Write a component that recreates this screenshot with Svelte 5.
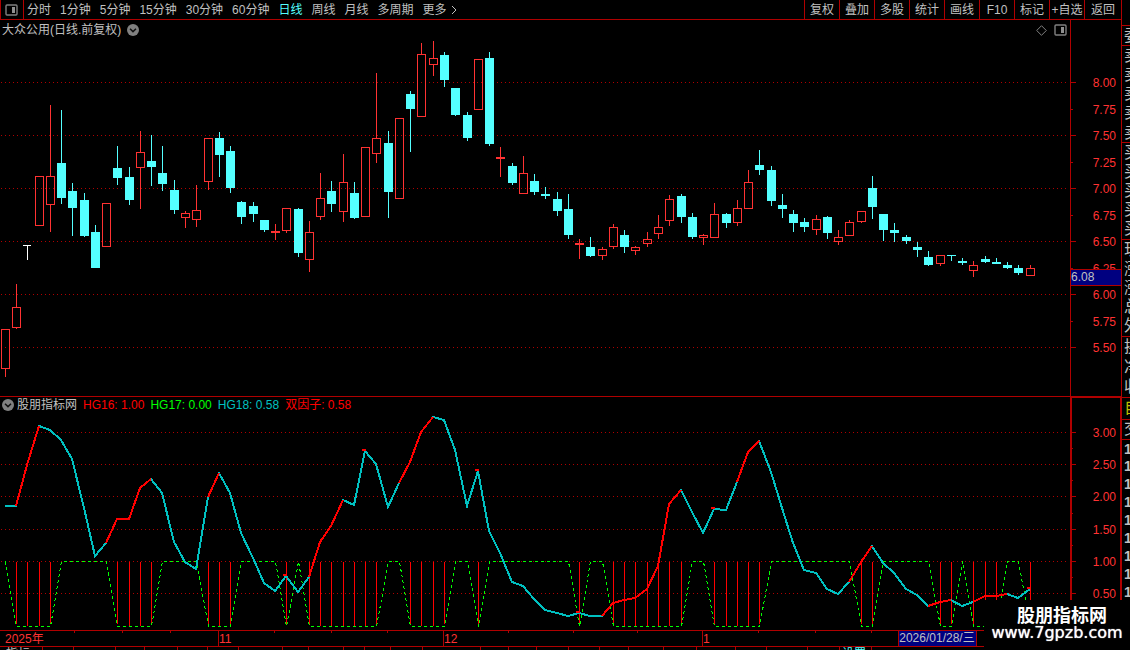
<script>
  const periods = ['分时', '1分钟', '5分钟', '15分钟', '30分钟', '60分钟', '日线', '周线', '月线', '多周期', '更多'];
  const tools = ['复权', '叠加', '多股', '统计', '画线', 'F10', '标记', '+自选', '返回'];
  let active = $state('日线');

  const xAt = (i) => Math.floor(5.3 + i * 11.262);
  const TOP = 20;
  const LOW_TOP = 397;
  const W = 1070;
  const H1 = 376;
  const H2 = 233;

  // kind (u = up, d = down, f = flat), high, body top, body bottom, low
  const candles = `u 329 329 369 377|u 284 307 328 329|f 245 245 246 260|u 176 176 226 226|u 105 176 205 232|d 110 163 198 204
d 183 191 208 236|d 193 200 236 237|d 225 232 268 268|u 203 203 247 247|d 146 168 178 185|d 167 177 200 205
u 131 152 168 209|d 135 161 167 186|d 146 173 184 191|d 180 190 210 214|u 211 213 218 228|u 185 210 220 227
u 138 138 182 190|d 132 138 155 177|d 146 151 188 193|d 201 202 217 224|d 202 206 214 222|d 220 220 230 232
u 224 231 233 240|u 208 208 231 233|d 208 209 253 257|u 221 232 260 272|u 173 198 217 220|d 181 191 204 212
u 154 182 212 222|d 182 193 218 219|u 147 147 217 217|u 73 138 154 163|d 131 143 192 218|u 118 118 199 199
d 91 94 109 152|u 43 54 117 117|u 41 58 65 76|d 52 55 80 87|d 88 88 115 116|d 112 115 138 141
u 59 59 110 110|d 52 58 144 146|u 147 157 159 177|d 163 166 183 185|u 156 173 194 194|d 174 181 192 195
d 187 194 196 199|d 192 199 211 216|d 194 209 235 239|u 239 243 245 259|d 237 247 256 257|u 247 249 256 260
u 224 227 247 249|d 230 235 247 253|u 246 247 251 255|u 232 239 244 247|u 215 227 234 239|u 195 199 221 226
d 194 196 217 223|d 213 217 237 239|u 234 235 238 245|u 203 214 238 238|d 213 214 223 228|u 200 208 223 226
u 170 182 209 209|d 150 165 170 175|d 166 170 201 206|d 194 205 209 218|d 210 214 223 232|d 218 222 227 232
u 215 219 230 235|d 216 217 233 239|u 230 237 242 245|u 220 222 236 236|u 211 211 222 223|d 176 188 207 219
d 214 214 230 241|d 223 230 233 242|d 235 237 241 244|d 242 247 250 257|d 251 257 265 266|u 255 255 264 266
d 255 255 256 261|d 258 261 263 265|u 261 265 271 277|d 256 259 262 263|d 258 262 264 264|d 262 265 268 269
d 265 268 273 275|u 265 268 276 276`
    .split(/[|\n]/)
    .map((row, i) => {
      const [kind, ...v] = row.trim().split(' ');
      const [high, top, bottom, low] = v.map((n) => +n - TOP);
      return { kind, high, top, bottom, low, x: xAt(i) };
    });

  const factor = [
    506, 506, 465, 426, 430, 440, 459, 508, 556, 543, 519, 519, 488, 479, 493, 542, 562, 569, 497, 473,
    493, 533, 558, 583, 591, 576, 592, 577, 542, 526, 500, 505, 451, 464, 507, 483, 462, 432, 417, 420,
    450, 506, 471, 531, 553, 582, 586, 599, 610, 613, 616, 613, 616, 616, 603, 600, 598, 589, 566, 504,
    490, 512, 533, 509, 510, 482, 452, 441, 472, 508, 543, 570, 573, 589, 594, 582, 562, 546, 563, 573,
    589, 595, 606, 602, 600, 606, 602, 596, 596, 594, 598, 589
  ].map((y, i) => ({ x: xAt(i), y: y - LOW_TOP }));

  const rising = [[1, 3], [9, 13], [18, 19], [27, 30], [35, 38], [53, 60], [65, 67], [75, 77], [82, 84], [86, 89]];
  const single = [25, 32, 42, 51, 63, 91];
  const signalRuns = [[1, 4], [10, 13], [18, 20], [25, 25], [27, 33], [36, 39], [42, 42], [51, 51], [54, 60], [63, 67], [76, 77], [83, 84], [86, 88], [91, 91]];
  const inRun = (i) => signalRuns.some(([a, b]) => i >= a && i <= b);
  const edge = (i) => signalRuns.some(([a, b]) => i === a || i === b);
  const pts = (list) => list.map((p) => `${p.x},${p.y}`).join(' ');
  const signals = factor.map((p, i) => ({ x: p.x, on: inRun(i), edge: edge(i) }));
  const stateLine = signals.map((s) => `${s.x + 0.5},${s.on ? 229.5 : 164.5}`).join(' ');

  const priceGrid = [82, 135, 188, 241, 294, 347].map((y) => y - TOP);
  const priceTicks = ['8.00', '7.75', '7.50', '7.25', '7.00', '6.75', '6.50', '6.25', '6.00', '5.75', '5.50'].map((t, i) => ({
    t, major: i % 2 === 0, y: 62 + Math.floor(i * 26.5 + 0.5)
  }));
  const factorGrid = [432, 464, 496, 529, 561, 593].map((y) => y - LOW_TOP);
  const factorLabels = ['3.00', '2.50', '2.00', '1.50', '1.00', '0.50'];
  const factorMinor = [448, 480, 513, 545, 577].map((y) => y - LOW_TOP);

  const dayTicks = [74, 122, 170, 274, 331, 387, 508, 573, 637, 758, 815, 871];
  const months = [{ x: 218, t: '11' }, { x: 443, t: '12' }, { x: 702, t: '1' }];
  const tabTicks = [42, 73, 115, 144, 177, 207, 238, 282, 308, 343, 364, 390, 422, 480, 508, 536, 568, 599, 628, 663, 696, 735, 766, 807, 839, 871];

  const quote = [
    { h: 25, rows: [] },
    { h: 20, rows: ['委'] },
    { h: 97, rows: ['卖', '卖', '卖', '卖', '卖'] },
    { h: 97, rows: ['买', '买', '买', '买', '买'] },
    { h: 97, rows: ['现', '涨', '涨', '总', '外'] },
    { h: 61, rows: ['换', '净', '收'] },
    { h: 21, rows: ['自'], tone: 'own' },
    { h: 19, rows: ['交'] },
    { h: 163, rows: ['1', '1', '1', '1', '1', '1', '1', '1', '1'], tone: 'deals' },
    { h: 50, rows: [], tone: 'rest' }
  ];
  const px = (n) => `${(n / W) * 100}%`;
  const py = (n, h) => `${(n / h) * 100}%`;
</script>

{#snippet panelIcon()}
  <svg class="icon" width="13" height="12" viewBox="0 0 13 12" aria-hidden="true">
    <rect x="1" y="1" width="11" height="10" rx="1" fill="none" stroke="#808080" stroke-width="1.4" />
    <rect x="7" y="3" width="3" height="6" fill="#909090" />
  </svg>
{/snippet}

{#snippet chevron()}
  <svg class="icon" width="12" height="12" viewBox="0 0 12 12" aria-hidden="true">
    <circle cx="6" cy="6" r="6" fill="#808080" />
    <path d="M3 4.8 6 7.6 9 4.8" fill="none" stroke="#101010" stroke-width="1.5" />
  </svg>
{/snippet}

<div class="app">
  <header>
    <button class="layout" aria-label="布局">{@render panelIcon()}</button>
    <nav class="periods">
      {#each periods as p}
        <button class:active={p === active} onclick={() => (active = p)}>{p}</button>
      {/each}
      <svg class="more" width="6" height="10" viewBox="0 0 6 10" aria-hidden="true">
        <path d="M1 1 5 5 1 9" fill="none" stroke="#c0c0c0" />
      </svg>
    </nav>
    <nav class="tools">
      {#each tools as t}<button>{t}</button>{/each}
    </nav>
  </header>

  <section class="price">
    <div class="caption">
      <span>大众公用(日线.前复权)</span>
      <button aria-label="展开">{@render chevron()}</button>
      <span class="right">
        <svg class="icon" width="11" height="11" viewBox="0 0 11 11" aria-hidden="true">
          <path d="M5.5.7 10.3 5.5 5.5 10.3.7 5.5Z" fill="none" stroke="#808080" />
        </svg>
        {@render panelIcon()}
      </span>
    </div>
    <svg class="plot" viewBox="0 0 {W} {H1}" preserveAspectRatio="none" role="img" aria-label="日线">
      {#each priceGrid as y}
        <line x1="1" x2="1067" y1={y + 0.5} y2={y + 0.5} class="grid" />
      {/each}
      {#each candles as c}
        {#if c.kind === 'f'}
          <path d="M{c.x - 4} {c.top}h8v1h-8z M{c.x} {c.top}h1V{c.low}h-1z" fill="#fff" />
        {:else if c.kind === 'd'}
          <path d="M{c.x - 4} {c.top}h9V{c.bottom}h-9z M{c.x} {c.high}h1V{c.low}h-1z" fill="#54ffff" />
        {:else}
          <rect x={c.x - 3.5} y={c.top + 0.5} width="8" height={c.bottom - c.top - 1} fill="none" stroke="#ff3232" />
          <path d="M{c.x} {c.high}h1V{c.top}h-1z M{c.x} {c.bottom}h1V{c.low}h-1z" fill="#ff3232" />
        {/if}
      {/each}
    </svg>
  </section>

  <aside class="axis">
    <svg>
      {#each priceTicks as k}
        <rect x="0" y={py(k.y, H1)} width={k.major ? 5 : 2} height="1" fill="#b00000" />
        <text x="45" y={py(k.y, H1)} dy="5">{k.t}</text>
      {/each}
    </svg>
    <output class="last">6.08</output>
  </aside>

  <section class="factor">
    <div class="caption legend">
      <span class="name">
        <button aria-label="展开">{@render chevron()}</button>
        <span>股朋指标网</span>
      </span>
      <span class="red">HG16: 1.00</span>
      <span class="green">HG17: 0.00</span>
      <span class="teal">HG18: 0.58</span>
      <span class="red">双因子: 0.58</span>
    </div>
    <svg class="plot" viewBox="0 0 {W} {H2}" preserveAspectRatio="none" role="img" aria-label="双因子">
      {#each factorGrid as y}
        <line x1="1" x2="1067" y1={y + 0.5} y2={y + 0.5} class="grid" />
      {/each}
      {#each signals as s}
        {#if s.on}<rect x={s.x} y="165" width="1" height={s.edge ? 62 : 64} fill="#f00" />{/if}
      {/each}
      <polyline points={stateLine} fill="none" stroke="#0f0" stroke-dasharray="3 3" />
      <polyline points={pts(factor)} fill="none" stroke="#00c0c0" stroke-width="2" />
      {#each rising as [a, b]}
        <polyline points={pts(factor.slice(a, b + 1))} fill="none" stroke="#f00" stroke-width="2" />
      {/each}
      {#each single as i}
        <rect x={factor[i].x - 3} y={factor[i].y - 2} width="4" height="2" fill="#f00" />
      {/each}
    </svg>
  </section>

  <aside class="axis framed">
    <svg>
      {#each factorGrid as y, i}
        <rect x="0" y={py(y - 1, 232)} width="4" height="1" fill="#b00000" />
        <text x="44" y={py(y - 1, 232)} dy="5">{factorLabels[i]}</text>
      {/each}
      {#each factorMinor as y}
        <rect x="0" y={py(y - 1, 232)} width="1" height="1" fill="#b00000" />
      {/each}
    </svg>
  </aside>

  <footer class="dates">
    <svg>
      {#each dayTicks as x}<rect x={px(x)} y="0" width="1" height="2" fill="#b00000" />{/each}
      <text x="5" y="12">2025年</text>
      {#each months as m}
        <rect x={px(m.x)} y="0" width="1" height="15" fill="#b00000" />
        <text x={px(m.x)} dx="1" y="12">{m.t}</text>
      {/each}
    </svg>
    <time class="cursor" datetime="2026-01-28">2026/01/28/三</time>
  </footer>

  <div class="tabs">
    <svg>
      {#each tabTicks as x}<rect x={px(x)} y="0" width="1" height="3" fill="#b00000" />{/each}
      <text x="6" y="11">指标</text>
      <text x={px(842)} y="11" class="on">设置</text>
    </svg>
  </div>

  <aside class="quote">
    {#each quote as g}
      <div class="group {g.tone ?? ''}" style:flex-grow={g.h}>
        {#each g.rows as r}<span>{r}</span>{/each}
      </div>
    {/each}
  </aside>

  <div class="brand">
    <strong>股朋指标网</strong>
    <span>www.7gpzb.com</span>
  </div>
</div>

<style>
  :global(body) {
    background: #000;
  }
  .app {
    position: relative;
    display: grid;
    grid-template-columns: minmax(0, 1fr) 51px 9px;
    grid-template-rows: 20px minmax(0, 377fr) minmax(0, 233fr) 17px 3px;
    height: 100vh;
    overflow: hidden;
    background: #000;
    color: #c0c0c0;
    font: 12px/16px 'Liberation Sans', 'Noto Sans CJK SC', sans-serif;
  }
  button {
    padding: 0;
    border: 0;
    background: none;
    color: inherit;
    font: inherit;
    white-space: nowrap;
    cursor: pointer;
  }
  svg {
    display: block;
  }
  .icon {
    flex: none;
  }
  header {
    grid-column: 1 / 3;
    box-sizing: border-box;
    display: flex;
    border-bottom: 1px solid #b00000;
  }
  .layout {
    display: grid;
    place-items: center start;
    box-sizing: border-box;
    width: 24px;
    padding-left: 4px;
    border: solid #b00000;
    border-width: 0 1px;
  }
  .periods {
    display: flex;
    flex: 1;
    align-items: center;
    gap: 9px;
    padding-left: 3px;
  }
  .more {
    margin-left: -5px;
  }
  .active {
    color: #54ffff;
  }
  .tools {
    display: flex;
  }
  .tools button {
    box-sizing: border-box;
    width: 35px;
    border-left: 1px solid #b00000;
  }
  .tools button:last-child {
    width: 37px;
  }
  .price,
  .factor {
    position: relative;
    grid-column: 1;
    min-height: 0;
  }
  .price {
    box-sizing: border-box;
    border-bottom: 1px solid #b00000;
  }
  .plot {
    width: 100%;
    height: 100%;
    shape-rendering: crispEdges;
  }
  .grid {
    stroke: #b00000;
    stroke-dasharray: 1 3;
  }
  .caption {
    position: absolute;
    inset: 2px 0 auto;
    display: flex;
    align-items: center;
    gap: 6px;
    padding: 0 3px 0 2px;
  }
  .legend {
    inset: 0 0 auto;
  }
  .name {
    display: flex;
    align-items: center;
    gap: 3px;
  }
  .right {
    display: flex;
    align-items: center;
    gap: 7px;
    margin-left: auto;
  }
  .red {
    color: #f00;
  }
  .green {
    color: #0f0;
  }
  .teal {
    color: #00c0c0;
  }
  .axis {
    position: relative;
    grid-column: 2;
    box-sizing: border-box;
    min-height: 0;
    border: solid #b00000;
    border-width: 0 0 1px 1px;
  }
  .framed {
    border-width: 1px 1px 0 2px;
  }
  .axis svg,
  .dates svg,
  .tabs svg {
    width: 100%;
    height: 100%;
    shape-rendering: crispEdges;
  }
  text {
    fill: #ff3232;
  }
  .axis text {
    text-anchor: end;
  }
  .last {
    position: absolute;
    top: 66.3%;
    left: 0;
    right: 0;
    border: solid #b00000;
    border-width: 1px 0;
    background: #000080;
    line-height: 15px;
  }
  .dates {
    position: relative;
    grid-column: 1;
    box-sizing: border-box;
    border: solid #b00000;
    border-width: 1px 0;
  }
  .cursor {
    position: absolute;
    top: 0;
    left: 83.95%;
    box-sizing: border-box;
    height: 15px;
    padding: 0 1px 0 0;
    border: solid #b00000;
    border-width: 0 1px;
    background: #000080;
    line-height: 15px;
    white-space: nowrap;
  }
  .tabs {
    grid-column: 1;
    overflow: hidden;
  }
  .tabs text {
    fill: #c0c0c0;
  }
  .tabs .on {
    fill: #54ffff;
  }
  .quote {
    grid-column: 3;
    grid-row: 1 / 6;
    display: flex;
    flex-direction: column;
    overflow: hidden;
    border-left: 1px solid #b00000;
    font-size: 16px;
  }
  .group {
    box-sizing: border-box;
    display: flex;
    flex: 1 1 0;
    flex-direction: column;
    min-height: 0;
    padding-left: 2px;
    border-top: 1px solid #b00000;
  }
  .group:first-child,
  .rest {
    border-top: 0;
  }
  .group span {
    display: flex;
    flex: 1 1 0;
    align-items: center;
    min-height: 0;
    line-height: 16px;
  }
  .own {
    color: #c0c000;
  }
  .deals {
    font-weight: bold;
    font-size: 14px;
  }
  .brand {
    position: absolute;
    right: 0;
    bottom: 0;
    box-sizing: border-box;
    width: 146px;
    height: 50px;
    padding: 4px 6px 0;
    background: #000;
    color: #fff;
    text-align: center;
  }
  .brand strong {
    display: block;
    padding-left: 10px;
    font: bold 18px/20px 'Noto Sans CJK SC', sans-serif;
  }
  .brand span {
    font: 16px/18px 'DejaVu Sans', sans-serif;
    text-shadow: 0 0 1px #fff;
  }
</style>
